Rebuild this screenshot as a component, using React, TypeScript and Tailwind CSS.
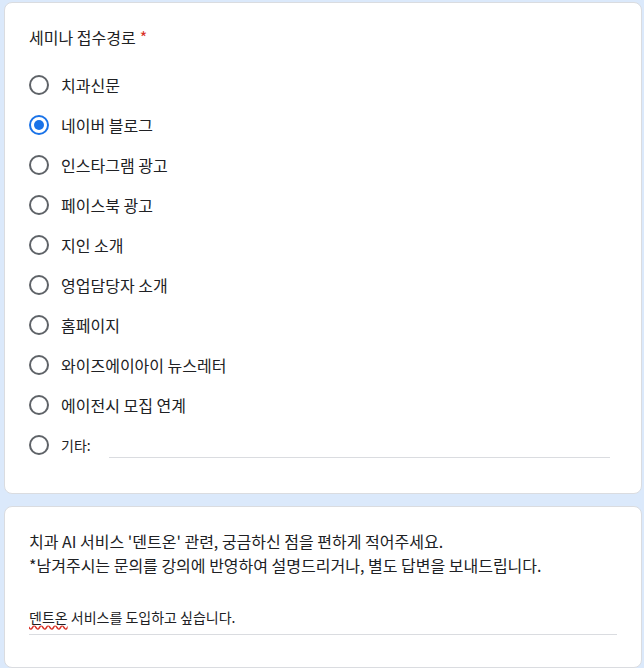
import React from "react";

const options = [
  "치과신문",
  "네이버 블로그",
  "인스타그램 광고",
  "페이스북 광고",
  "지인 소개",
  "영업담당자 소개",
  "홈페이지",
  "와이즈에이아이 뉴스레터",
  "에이전시 모집 연계",
];

function Radio({ checked }: { checked?: boolean }) {
  return (
    <span
      className={
        checked
          ? "flex h-5 w-5 shrink-0 items-center justify-center rounded-full border-2 border-[#1a73e8]"
          : "flex h-5 w-5 shrink-0 items-center justify-center rounded-full border-2 border-[#5f6368]"
      }
    >
      {checked && <span className="h-[10px] w-[10px] rounded-full bg-[#1a73e8]" />}
    </span>
  );
}

export default function App() {
  return (
    <div
      className="min-h-[668px] bg-[#dbe9fb] pt-[2px] pl-[4px] pr-[2px] pb-[4px] text-[#202124]"
      style={{ fontFamily: '"Noto Sans CJK KR", "Noto Sans", Roboto, sans-serif' }}
    >
      <div className="flex flex-col gap-[12px]">
        {/* 첫번째 질문 */}
        <div className="rounded-lg border border-[#dadce0] bg-white px-6 pt-[22px] pb-[28px]">
          <div className="flex items-center text-[16px] leading-6">
            세미나 접수경로<span className="ml-1 text-[#d93025]">*</span>
          </div>
          <div className="mt-[16px] flex flex-col">
            {options.map((opt, i) => (
              <div key={opt} className="flex h-10 items-center gap-3">
                <Radio checked={i === 1} />
                <span className="text-[16px]">{opt}</span>
              </div>
            ))}
            <div className="flex h-10 items-center gap-3">
              <Radio />
              <span className="text-[14px]">기타:</span>
              <div className="ml-[6px] flex-1 self-stretch pr-[7px]">
                <div className="h-[33px] border-b border-[#dadce0]" />
              </div>
            </div>
          </div>
        </div>

        {/* 두번째 질문 */}
        <div className="rounded-lg border border-[#dadce0] bg-white px-6 pt-[22px] pb-[32px]">
          <p className="text-[16px] leading-6">
            치과 AI 서비스 '덴트온' 관련, 궁금하신 점을 편하게 적어주세요.
          </p>
          <p className="text-[16px] leading-6">
            *남겨주시는 문의를 강의에 반영하여 설명드리거나, 별도 답변을 보내드립니다.
          </p>
          <div className="mt-[28px] border-b border-[#dadce0] pb-[5px] text-[14px] leading-6">
            <span className="underline decoration-wavy decoration-[#d93025] underline-offset-2">덴트온</span>{" "}
            서비스를 도입하고 싶습니다.
          </div>
        </div>
      </div>
    </div>
  );
}
